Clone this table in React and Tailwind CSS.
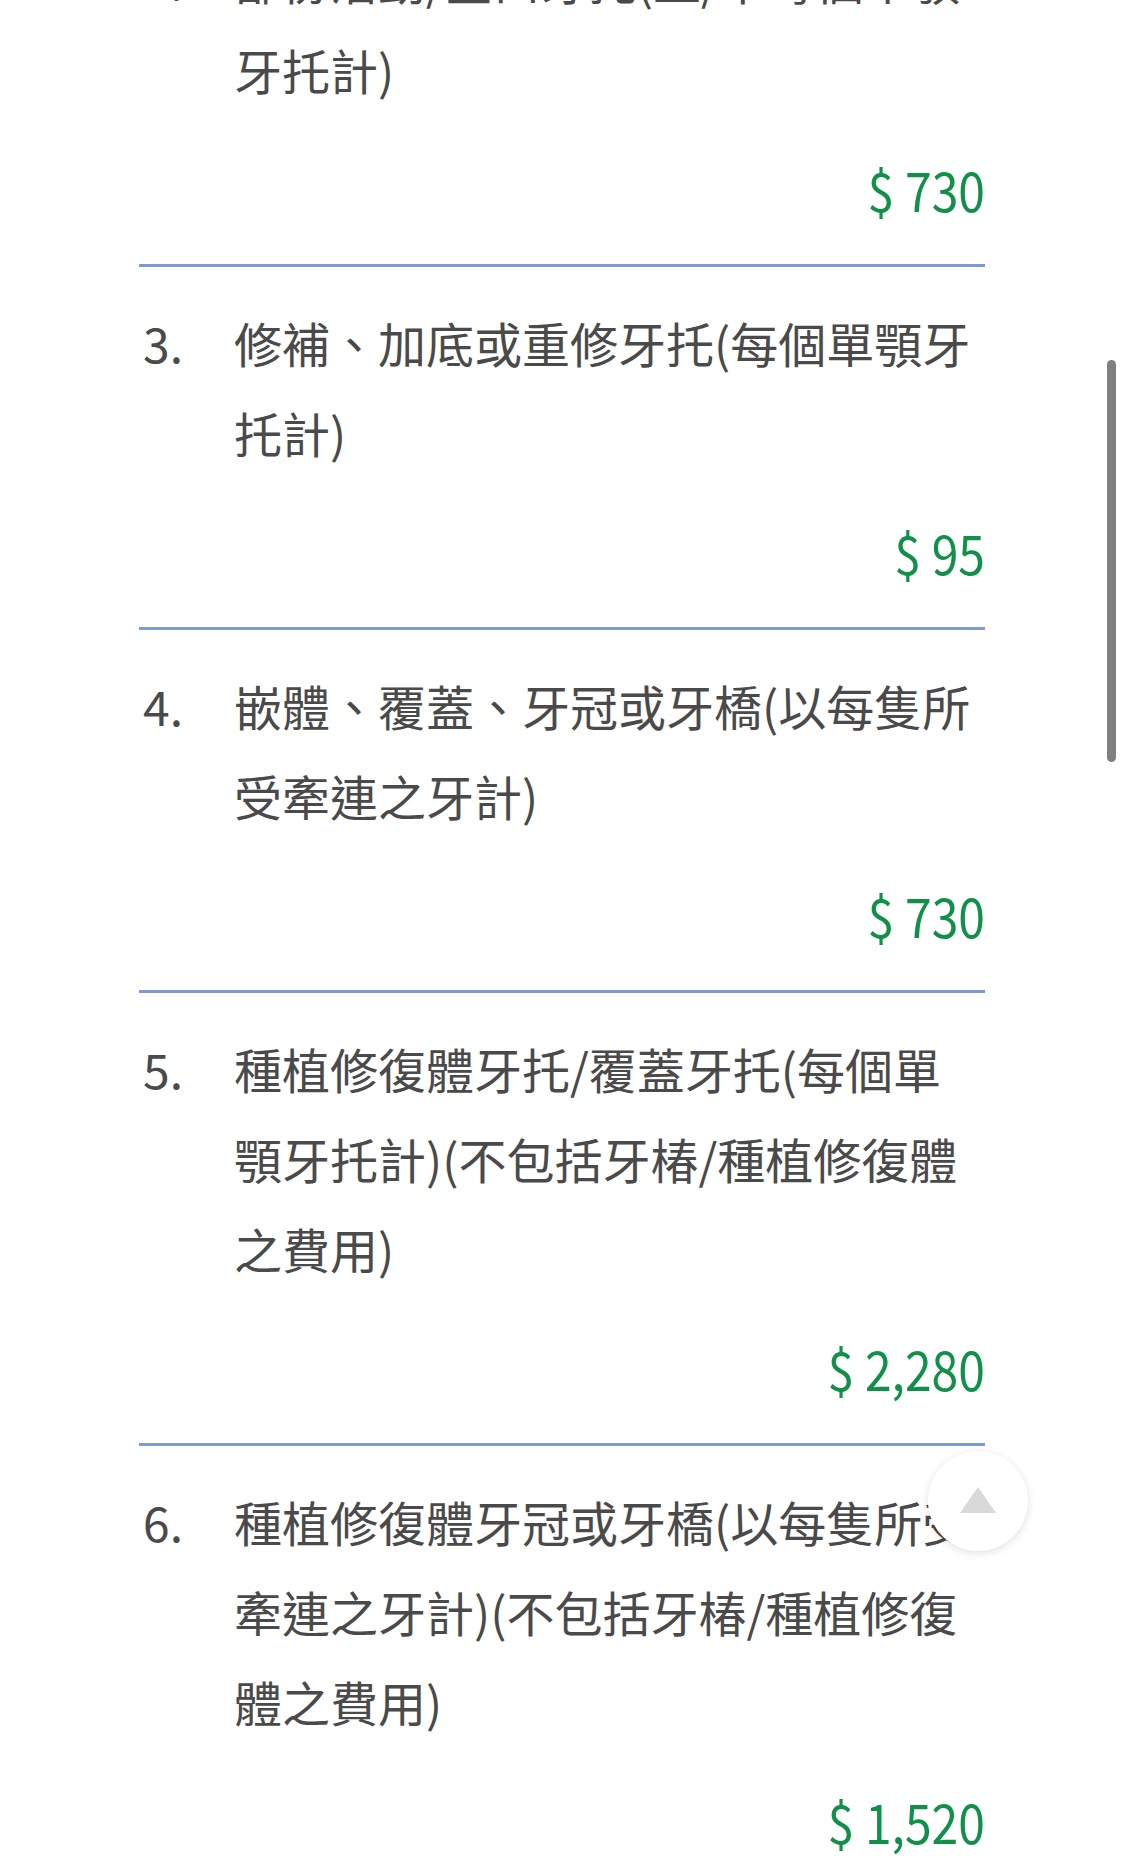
import React from "react";

const items = [
  { n: "2.", t: "部份活動/全口牙托(上/下每個單顎牙托計)", p: "$ 730" },
  { n: "3.", t: "修補、加底或重修牙托(每個單顎牙托計)", p: "$ 95" },
  { n: "4.", t: "嵌體、覆蓋、牙冠或牙橋(以每隻所受牽連之牙計)", p: "$ 730" },
  { n: "5.", t: "種植修復體牙托/覆蓋牙托(每個單顎牙托計)(不包括牙椿/種植修復體之費用)", p: "$ 2,280" },
  { n: "6.", t: "種植修復體牙冠或牙橋(以每隻所受牽連之牙計)(不包括牙椿/種植修復體之費用)", p: "$ 1,520" },
];

export default function App() {
  return (
    <div
      className="relative w-[1125px] h-[1860px] overflow-hidden bg-white"
      style={{ fontFamily: '"Noto Sans CJK TC", "Noto Sans", sans-serif' }}
    >
      <div className="-mt-[96px] ml-[139px] w-[846px]">
        {items.map((it, i) => (
          <div
            key={i}
            className={
              "pt-[30px] pb-[30px] " +
              (i < items.length - 1 ? "border-b-[3px] border-[#7b9bd2]" : "")
            }
          >
            <div className="flex text-[48px] leading-[90px] text-[#4a4a4a]">
              <div className="w-[95px] shrink-0 pl-[4px]">{it.n}</div>
              <div className="w-[751px]">{it.t}</div>
            </div>
            <div className="mt-[30px] text-right text-[54px] leading-[90px] text-[#11904a]">
              <span className="inline-block origin-right scale-x-[0.89]">{it.p}</span>
            </div>
          </div>
        ))}
      </div>

      {/* scrollbar */}
      <div className="absolute left-[1107px] top-[360px] w-[9px] h-[402px] rounded-full bg-[#808080]" />

      {/* back to top button */}
      <div className="absolute left-[928px] top-[1451px] w-[100px] h-[100px] rounded-full bg-white shadow-[0_2px_8px_rgba(0,0,0,0.12)] flex items-center justify-center">
        <svg width="36" height="26" viewBox="0 0 36 26" className="-mt-[2px]">
          <polygon points="18,0 36,26 0,26" fill="#d9d9d9" />
        </svg>
      </div>
    </div>
  );
}
